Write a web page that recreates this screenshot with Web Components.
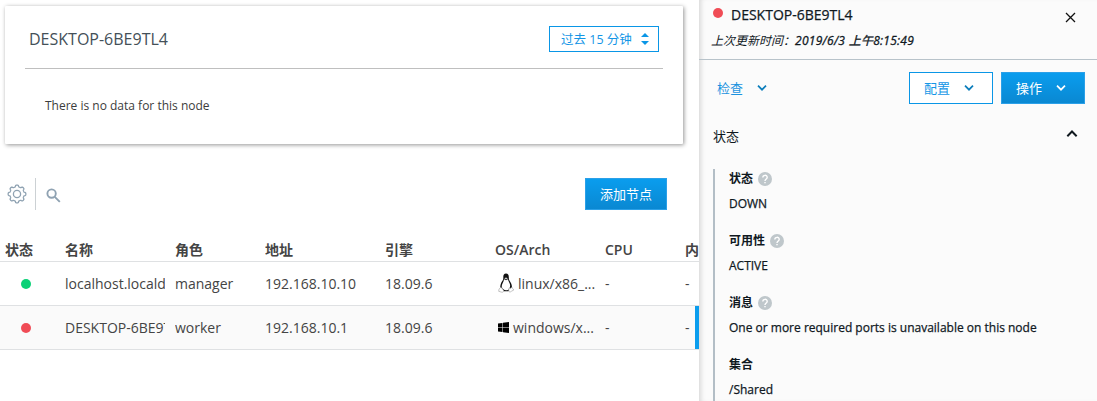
<!DOCTYPE html>
<html lang="zh-CN">
<head>
<meta charset="utf-8">
<title>Nodes</title>
<style>
html, body { margin: 0; height: 100%; overflow: hidden; }
body { font-family: "Open Sans", "Noto Sans CJK SC", sans-serif; font-size: 14px; color: #445058; background: #fff; }
</style>
</head>
<body>
<node-app></node-app>
<script>
function define(name, html) {
  const t = document.createElement('template');
  t.innerHTML = '<style>*{box-sizing:border-box}:host{box-sizing:border-box}</style>' + html;
  customElements.define(name, class extends HTMLElement {
    constructor() {
      super();
      this.attachShadow({ mode: 'open' }).appendChild(t.content.cloneNode(true));
    }
  });
}

// Outline of a gear with eight rounded teeth, centred in a 20x20 box.
function gearPath() {
  const pts = [];
  for (let i = 0; i < 160; i++) {
    const a = i / 160 * 2 * Math.PI;
    const r = 8 + .85 * Math.tanh(2.2 * Math.cos(8 * a));
    pts.push((10 + r * Math.sin(a)).toFixed(2) + ' ' + (10 - r * Math.cos(a)).toFixed(2));
  }
  return 'M' + pts.join('L') + 'Z';
}

define('status-dot', `<style>
:host { display: block; flex: none; width: 10px; height: 10px; border-radius: 50%; background: #f04c56; }
:host([up]) { background: #0bd177; }
</style>`);

define('chevron-icon', `<style>
:host { display: block; flex: none; width: 10px; height: 6px; }
:host([up]) { transform: rotate(180deg); width: 12px; height: 7px; margin-top: -4px; }
svg { display: block; width: 100%; height: 100%; }
</style><svg viewBox="0 0 10 6" fill="none" stroke="currentColor" stroke-width="1.7"><path d="M1 .7 5 4.7 9 .7"/></svg>`);

define('ui-button', `<style>
:host { display: flex; align-items: center; justify-content: center; height: 32px; font-size: 13px; line-height: 18px; white-space: nowrap;
  color: #fff; border: 1px solid #2ba0e8; background: linear-gradient(#0a9dee, #0a88d2); }
:host([outline]) { color: #1496e6; background: #fff; border-color: #0a96e6; }
:host([plain]) { color: #1b93df; background: none; border: 0; }
::slotted(chevron-icon) { margin-left: 14px; margin-right: 4px; }
:host([outline]) ::slotted(chevron-icon), :host([plain]) ::slotted(chevron-icon) { color: #0b7dbb; }
</style><slot></slot>`);

define('range-select', `<style>
:host { display: flex; align-items: center; justify-content: space-between; width: 110px; height: 26px; padding: 0 9px 0 11px; border: 1px solid #0a96e6; color: #1496e6; font-size: 12.5px; line-height: 18px; white-space: nowrap; }
svg { display: block; width: 8px; height: 12px; }
span { padding-top: 1px; }
</style><span><slot></slot></span><svg viewBox="0 0 8 12" fill="#0a96e6"><path d="M4 0 8 4H0ZM4 12 0 8H8Z"/></svg>`);

define('usage-card', `<style>
:host { display: flex; flex-direction: column; margin: 6px 16px 0 5px; height: 138px; padding: 0 20px; background: #fff; border-radius: 1px; box-shadow: 1px 1px 4px rgba(0,0,0,.42); }
header { display: flex; align-items: center; justify-content: space-between; height: 63px; padding: 4px 4px 0 4px; border-bottom: 1px solid #bfbfbf; font-size: 16px; }
p { margin: 0; padding: 28px 20px 0; font-size: 12px; line-height: 18px; color: #3c3c3c; }
</style>
<header><span><slot name="title"></slot></span><slot name="range"></slot></header><p><slot></slot></p>`);

define('table-toolbar', `<style>
:host { display: flex; align-items: center; height: 32px; margin-top: 34px; padding: 0 32px 0 7px; }
svg { display: block; flex: none; fill: none; stroke: #8fa2b2; }
i { width: 1px; height: 32px; margin: 0 10px 0 8px; background: #ccd1d4; }
ui-button { margin-left: auto; width: 82px; }
</style>
<svg width="20" height="20" viewBox="0 0 20 20" stroke-width="1.3"><path stroke-linejoin="round" d="${gearPath()}"/><circle cx="10" cy="10" r="3.600"/></svg>
<i></i>
<svg width="15" height="15" viewBox="0 0 15 15" stroke-width="1.9" style="margin-top:3px"><circle cx="5.6" cy="5.6" r="4.2"/><path d="m8.8 8.8 5 5"/></svg>
<ui-button>添加节点</ui-button>`);

define('table-row', `<style>
:host { display: grid; grid-template-columns: 60px 110px 90px 120px 110px 110px 80px 80px; align-items: center; height: 44px; width: 100%; overflow: hidden; border-bottom: 1px solid #dfe1e3; color: #444; }
:host([head]) { font-weight: 600; height: 28px; padding-top: 4px; }
:host([selected]) { background: #fafafa; box-shadow: inset -4px 0 #0a9dee; }
</style><slot></slot>`);

define('table-cell', `<style>
:host { display: block; padding: 0 5px; line-height: 22px; min-width: 0; }
div { overflow: hidden; white-space: nowrap; }
:host([dots]) { padding-right: 2px; }
:host([dot]) { padding-left: 21px; }
::slotted(os-icon) { margin-right: 4px; }
</style><div><slot></slot></div>`);

define('os-icon', `<style>
:host { display: inline-block; vertical-align: middle; }
svg { display: none; }
:host([linux]) { margin-left: 3px; margin-top: -3px; height: 20px; }
:host([windows]) { margin-left: 3px; margin-top: -3px; height: 11px; }
:host([linux]) .l, :host([windows]) .w { display: block; }
</style>
<svg class="l" width="16" height="20" viewBox="0 0 16 20"><path fill="#111" d="M8 .5C6 .5 5.2 2 5.3 4c.1 2-.2 2.800-1.200 4.300C3 10 2.300 12 2.200 14.500L6 18.300h4.500l3.400-3.800c.2-2.500-.9-4.500-2-6.200C10.900 6.800 10.800 5.800 10.800 4 10.800 1.800 10 .5 8 .5Z"/><path fill="#fff" d="M6 6.300 8 7.300l2-1.100c.3 2 1.700 3.300 2 5.300.3 1.500.1 2.900-.7 4.200-.7 1-1.700 1.500-3.300 1.500-2 0-3.300-1.100-4-2.600-.5-1.200-.2-2.600.4-3.900C5 9.300 5.800 8.300 6 6.300Z"/><path fill="#ccc" d="M6.300 5.200 8 4.500l1.800.7L8 6.500Z"/><g fill="#fff" stroke="#999" stroke-width=".6"><path d="m2.700 14.300 1.700 1.200 1.300 2.400c-.3 1.700-1.600 1.500-3 1l-2-.6.4-2.200Z"/><path d="m11 15 2 .3 1-1 .8 1.500 1 1.200-2.300 1.200c-1.400 1.300-2.700.9-2.700-.7Z"/></g></svg>
<svg class="w" width="11" height="11" viewBox="0 0 11 11"><path fill="#000" d="M0 1.600 4.500.900V5.200H0ZM5 .800 11 0V5.200H5ZM0 5.800H4.500V10.100L0 9.400ZM5 5.800H11V11L5 10.200Z"/></svg>`);

define('help-icon', `<style>
:host { display: block; width: 14px; height: 14px; border-radius: 50%; background: #bfc7cb; }
svg { display: block; }
</style><svg width="14" height="14" viewBox="0 0 14 14"><path fill="none" stroke="#fff" stroke-width="1.4" d="M4.800 5.600C4.800 2.600 9.200 2.600 9.200 5.400 9.200 6.900 7 7 7 9"/><path fill="#fff" d="M6.300 9.900h1.400v1.400H6.300z"/></svg>`);

define('detail-item', `<style>
:host { display: block; height: 62px; color: #10191f; font-size: 12px; line-height: 18px; white-space: nowrap; }
.k { display: flex; align-items: center; gap: 5px; font-weight: 700; height: 18px; }
.k slot { display: block; padding-top: 2px; }
.v { margin-top: 8px; -webkit-text-stroke: .25px; }
help-icon { display: none; }
:host([help]) help-icon { display: block; margin-top: 2px; }
</style><div class="k"><slot name="label"></slot><help-icon></help-icon></div><div class="v"><slot></slot></div>`);

define('node-panel', `<style>
:host { display: flex; flex-direction: column; width: 398px; height: 401px; background: #fbfbfb; box-shadow: inset 5px 0 5px -3px rgba(0,0,0,.14); overflow: hidden; color: #10191f; }
header { display: flex; height: 60px; flex: none; justify-content: space-between; border-bottom: 1px solid #b8c3ca; padding: 4px 21px 0 12px; }
.t { display: flex; align-items: center; gap: 8px; height: 20px; padding-left: 2px; -webkit-text-stroke: .25px; }
.t status-dot { margin-top: -2px; }
.u { margin-top: 8px; font-size: 12px; line-height: 18px; font-style: italic; white-space: nowrap; }
.u span + span { letter-spacing: .27px; -webkit-text-stroke: .3px; }
header svg { margin-top: 8px; }
.acts { display: flex; flex: none; gap: 8px; margin-top: 12px; padding: 0 12px 0 18px; }
.acts ui-button { width: 84px; }
.acts ui-button[plain] { width: auto; margin-right: auto; }
.sec { display: flex; align-items: center; justify-content: space-between; height: 20px; margin-top: 22px; padding: 0 19px 0 14px; font-size: 13px; }
.list { margin: 24px 0 0 14px; height: 260px; border-left: 2px solid #b3bec6; padding-left: 14px; }
</style>
<header><div><div class="t"><status-dot></status-dot><span>DESKTOP-6BE9TL4</span></div><div class="u"><span>上次更新时间：</span><span>2019/6/3 上午8:15:49</span></div></div>
<svg width="11" height="11" viewBox="0 0 11 11" fill="none" stroke="#111" stroke-width="1.3"><path d="m1 1 9 9M10 1 1 10"/></svg></header>
<div class="acts"><ui-button plain>检查<chevron-icon></chevron-icon></ui-button><ui-button outline>配置<chevron-icon></chevron-icon></ui-button><ui-button>操作<chevron-icon></chevron-icon></ui-button></div>
<div class="sec"><span>状态</span><chevron-icon up></chevron-icon></div>
<div class="list">
<detail-item help><span slot="label">状态</span>DOWN</detail-item>
<detail-item help><span slot="label">可用性</span>ACTIVE</detail-item>
<detail-item help><span slot="label">消息</span>One or more required ports is unavailable on this node</detail-item>
<detail-item><span slot="label">集合</span>/Shared</detail-item>
</div>`);

define('node-app', `<style>
:host { display: grid; grid-template-columns: 699px 398px; width: 1097px; height: 401px; overflow: hidden; }
main { min-width: 0; overflow: hidden; }
.tbl { margin-top: 24px; }
</style>
<main>
<usage-card><span slot="title">DESKTOP-6BE9TL4</span><range-select slot="range">过去 15 分钟</range-select>There is no data for this node</usage-card>
<table-toolbar></table-toolbar>
<div class="tbl">
<table-row head><table-cell>状态</table-cell><table-cell>名称</table-cell><table-cell>角色</table-cell><table-cell>地址</table-cell><table-cell>引擎</table-cell><table-cell>OS/Arch</table-cell><table-cell>CPU</table-cell><table-cell>内</table-cell></table-row>
<table-row><table-cell dot><status-dot up></status-dot></table-cell><table-cell>localhost.locald</table-cell><table-cell>manager</table-cell><table-cell>192.168.10.10</table-cell><table-cell>18.09.6</table-cell><table-cell dots><os-icon linux></os-icon>linux/x86_...</table-cell><table-cell>-</table-cell><table-cell>-</table-cell></table-row>
<table-row selected><table-cell dot><status-dot></status-dot></table-cell><table-cell>DESKTOP-6BE9T</table-cell><table-cell>worker</table-cell><table-cell>192.168.10.1</table-cell><table-cell>18.09.6</table-cell><table-cell dots><os-icon windows></os-icon>windows/x...</table-cell><table-cell>-</table-cell><table-cell>-</table-cell></table-row>
</div>
</main>
<node-panel></node-panel>`);
</script>
</body>
</html>
